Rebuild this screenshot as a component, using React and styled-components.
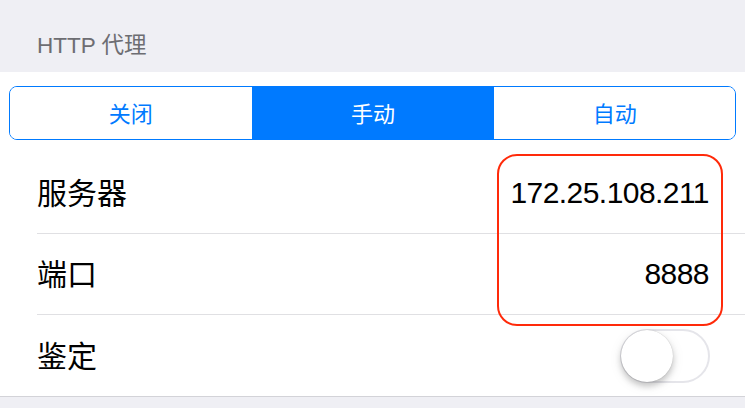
import React, { useState } from "react";
import styled, { createGlobalStyle } from "styled-components";

const Global = createGlobalStyle`
  html, body { margin: 0; padding: 0; background: #efeff4; }
  body { font-family: "Liberation Sans", "Noto Sans CJK SC", sans-serif; -webkit-font-smoothing: antialiased; }
`;

const Page = styled.div`
  width: 745px;
  height: 408px;
  background: #efeff4;
  overflow: hidden;
`;

const SectionHeader = styled.div`
  height: 72px;
  box-sizing: border-box;
  padding: 33px 0 0 37px;
  font-size: 22.5px;
  line-height: 26px;
  color: #6d6d72;
`;

const Panel = styled.div`
  position: relative;
  background: #fff;
  border-bottom: 1px solid #d3d3d8;
`;

const SegmentWrap = styled.div`
  padding: 14px 9px 13px 9px;
`;

const Segmented = styled.div`
  display: grid;
  grid-template-columns: 1fr 1fr 1fr;
  height: 54px;
  box-sizing: border-box;
  border: 1.5px solid #007aff;
  border-radius: 8px;
  overflow: hidden;
`;

const Segment = styled.button`
  all: unset;
  display: flex;
  align-items: center;
  justify-content: center;
  padding-bottom: 3px;
  font-family: "Noto Sans CJK SC", sans-serif;
  font-size: 22px;
  color: ${(p) => (p.$active ? "#fff" : "#007aff")};
  background: ${(p) => (p.$active ? "#007aff" : "#fff")};
  & + & { border-left: 1.5px solid #007aff; }
`;

const List = styled.div`
  padding-left: 37px;
`;

const Row = styled.div`
  display: flex;
  align-items: center;
  justify-content: space-between;
  height: 81px;
  box-sizing: border-box;
  padding-right: 36px;
  padding-bottom: 4px;
  border-bottom: ${(p) => (p.$last ? "none" : "1px solid #e0e0e3")};
`;

const Label = styled.span`
  font-family: "Noto Sans CJK SC", sans-serif;
  font-size: 30px;
  color: #000;
`;

const Value = styled.span`
  font-family: "Liberation Sans", sans-serif;
  font-size: 30px;
  letter-spacing: -0.55px;
  padding-top: 4px;
  color: #000;
`;

const Switch = styled.div`
  position: relative;
  width: 90px;
  height: 54px;
  box-sizing: border-box;
  border: 2px solid #e5e5ea;
  border-radius: 27px;
  background: #fff;
  margin-right: -1px;
  margin-top: 4px;
`;

const Knob = styled.div`
  position: absolute;
  left: -1px;
  top: -1px;
  width: 52px;
  height: 52px;
  border-radius: 50%;
  background: #fff;
  box-shadow: 0 4px 6px rgba(0, 0, 0, 0.2), 0 0 1px rgba(0, 0, 0, 0.25), 0 3px 14px rgba(0,0,0,0.08);
`;

const Highlight = styled.div`
  position: absolute;
  left: 497px;
  top: 82px;
  width: 226px;
  height: 172px;
  box-sizing: border-box;
  border: 2px solid #ff2a0a;
  border-radius: 20px;
  pointer-events: none;
`;

export default function App() {
  const [mode] = useState(1);
  const segs = ["关闭", "手动", "自动"];
  return (
    <Page>
      <Global />
      <SectionHeader>HTTP 代理</SectionHeader>
      <Panel>
        <SegmentWrap>
          <Segmented>
            {segs.map((s, i) => (
              <Segment key={s} $active={i === mode}>{s}</Segment>
            ))}
          </Segmented>
        </SegmentWrap>
        <List>
          <Row>
            <Label>服务器</Label>
            <Value>172.25.108.211</Value>
          </Row>
          <Row>
            <Label>端口</Label>
            <Value>8888</Value>
          </Row>
          <Row $last>
            <Label>鉴定</Label>
            <Switch><Knob /></Switch>
          </Row>
        </List>
        <Highlight />
      </Panel>
    </Page>
  );
}
